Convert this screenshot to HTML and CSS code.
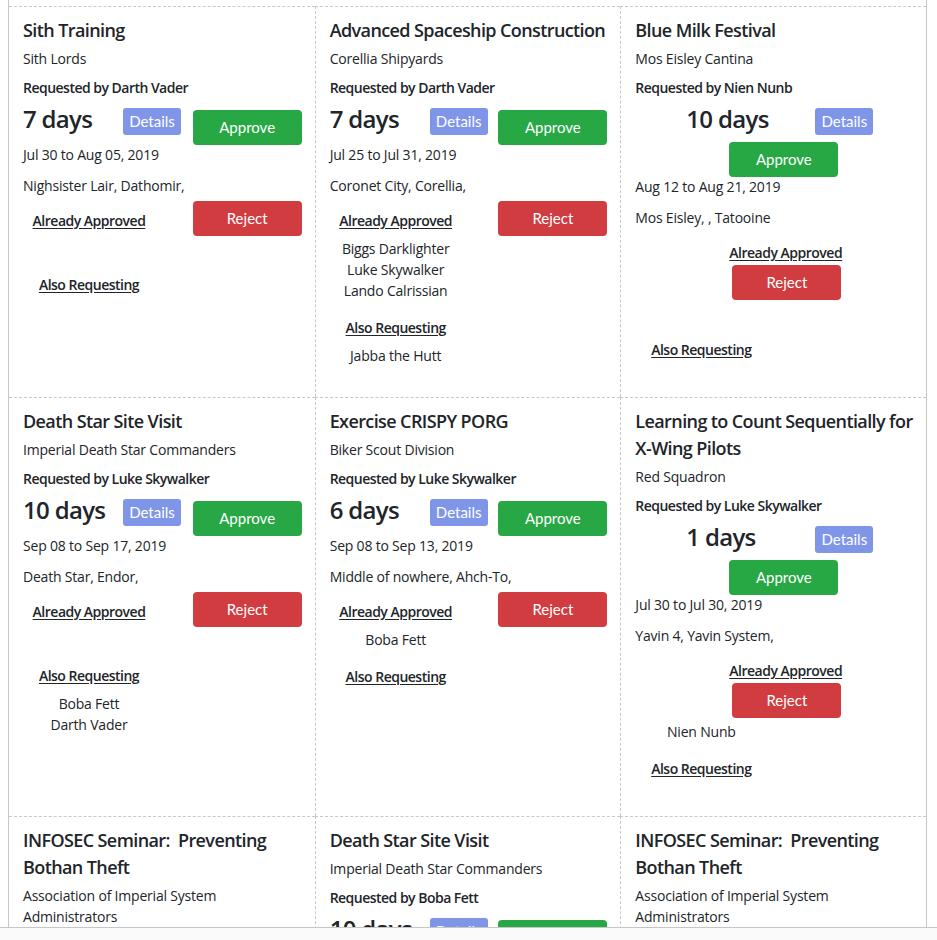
FILE: index.html
```html
<!DOCTYPE html>
<html lang="en">
<head>
<meta charset="utf-8">
<title>Training Requests</title>
<link rel="stylesheet" href="styles.css">
</head>
<body>
<main class="board">

  <section class="card">
    <h3 class="title">Sith Training</h3>
    <p class="org">Sith Lords</p>
    <p class="req">Requested by Darth Vader</p>
    <div class="summary">
      <span class="days">7 days</span>
      <button class="btn btn-details">Details</button>
      <button class="btn btn-approve">Approve</button>
    </div>
    <p class="dates">Jul 30 to Aug 05, 2019</p>
    <p class="loc">Nighsister Lair, Dathomir,</p>
    <div class="decision">
      <h4 class="list-head">Already Approved</h4>
      <ul class="names"></ul>
      <button class="btn btn-reject">Reject</button>
    </div>
    <div class="also">
      <h4 class="list-head">Also Requesting</h4>
      <ul class="names"></ul>
    </div>
  </section>

  <section class="card">
    <h3 class="title">Advanced Spaceship Construction</h3>
    <p class="org">Corellia Shipyards</p>
    <p class="req">Requested by Darth Vader</p>
    <div class="summary">
      <span class="days">7 days</span>
      <button class="btn btn-details">Details</button>
      <button class="btn btn-approve">Approve</button>
    </div>
    <p class="dates">Jul 25 to Jul 31, 2019</p>
    <p class="loc">Coronet City, Corellia,</p>
    <div class="decision">
      <h4 class="list-head">Already Approved</h4>
      <ul class="names">
        <li>Biggs Darklighter</li>
        <li>Luke Skywalker</li>
        <li>Lando Calrissian</li>
      </ul>
      <button class="btn btn-reject">Reject</button>
    </div>
    <div class="also">
      <h4 class="list-head">Also Requesting</h4>
      <ul class="names">
        <li>Jabba the Hutt</li>
      </ul>
    </div>
  </section>

  <section class="card card--wrap">
    <h3 class="title">Blue Milk Festival</h3>
    <p class="org">Mos Eisley Cantina</p>
    <p class="req">Requested by Nien Nunb</p>
    <div class="summary">
      <span class="days">10 days</span>
      <button class="btn btn-details">Details</button>
      <button class="btn btn-approve">Approve</button>
    </div>
    <p class="dates">Aug 12 to Aug 21, 2019</p>
    <p class="loc">Mos Eisley, , Tatooine</p>
    <div class="decision">
      <h4 class="list-head">Already Approved</h4>
      <ul class="names"></ul>
      <button class="btn btn-reject">Reject</button>
    </div>
    <div class="also">
      <h4 class="list-head">Also Requesting</h4>
      <ul class="names"></ul>
    </div>
  </section>

  <section class="card">
    <h3 class="title">Death Star Site Visit</h3>
    <p class="org">Imperial Death Star Commanders</p>
    <p class="req">Requested by Luke Skywalker</p>
    <div class="summary">
      <span class="days">10 days</span>
      <button class="btn btn-details">Details</button>
      <button class="btn btn-approve">Approve</button>
    </div>
    <p class="dates">Sep 08 to Sep 17, 2019</p>
    <p class="loc">Death Star, Endor,</p>
    <div class="decision">
      <h4 class="list-head">Already Approved</h4>
      <ul class="names"></ul>
      <button class="btn btn-reject">Reject</button>
    </div>
    <div class="also">
      <h4 class="list-head">Also Requesting</h4>
      <ul class="names">
        <li>Boba Fett</li>
        <li>Darth Vader</li>
      </ul>
    </div>
  </section>

  <section class="card">
    <h3 class="title">Exercise CRISPY PORG</h3>
    <p class="org">Biker Scout Division</p>
    <p class="req">Requested by Luke Skywalker</p>
    <div class="summary">
      <span class="days">6 days</span>
      <button class="btn btn-details">Details</button>
      <button class="btn btn-approve">Approve</button>
    </div>
    <p class="dates">Sep 08 to Sep 13, 2019</p>
    <p class="loc">Middle of nowhere, Ahch-To,</p>
    <div class="decision">
      <h4 class="list-head">Already Approved</h4>
      <ul class="names">
        <li>Boba Fett</li>
      </ul>
      <button class="btn btn-reject">Reject</button>
    </div>
    <div class="also">
      <h4 class="list-head">Also Requesting</h4>
      <ul class="names"></ul>
    </div>
  </section>

  <section class="card card--wrap">
    <h3 class="title">Learning to Count Sequentially for X-Wing Pilots</h3>
    <p class="org">Red Squadron</p>
    <p class="req">Requested by Luke Skywalker</p>
    <div class="summary">
      <span class="days">1 days</span>
      <button class="btn btn-details">Details</button>
      <button class="btn btn-approve">Approve</button>
    </div>
    <p class="dates">Jul 30 to Jul 30, 2019</p>
    <p class="loc">Yavin 4, Yavin System,</p>
    <div class="decision">
      <h4 class="list-head">Already Approved</h4>
      <ul class="names">
        <li>Nien Nunb</li>
      </ul>
      <button class="btn btn-reject">Reject</button>
    </div>
    <div class="also">
      <h4 class="list-head">Also Requesting</h4>
      <ul class="names"></ul>
    </div>
  </section>

  <section class="card">
    <h3 class="title">INFOSEC Seminar:&nbsp; Preventing Bothan Theft</h3>
    <p class="org">Association of Imperial System Administrators</p>
    <p class="req">Requested by Darth Vader</p>
    <div class="summary">
      <span class="days">3 days</span>
      <button class="btn btn-details">Details</button>
      <button class="btn btn-approve">Approve</button>
    </div>
    <p class="dates">Oct 01 to Oct 03, 2019</p>
    <p class="loc">Coruscant,</p>
    <div class="decision">
      <h4 class="list-head">Already Approved</h4>
      <ul class="names"></ul>
      <button class="btn btn-reject">Reject</button>
    </div>
    <div class="also">
      <h4 class="list-head">Also Requesting</h4>
      <ul class="names"></ul>
    </div>
  </section>

  <section class="card">
    <h3 class="title">Death Star Site Visit</h3>
    <p class="org">Imperial Death Star Commanders</p>
    <p class="req">Requested by Boba Fett</p>
    <div class="summary">
      <span class="days">10 days</span>
      <button class="btn btn-details">Details</button>
      <button class="btn btn-approve">Approve</button>
    </div>
    <p class="dates">Sep 08 to Sep 17, 2019</p>
    <p class="loc">Death Star, Endor,</p>
    <div class="decision">
      <h4 class="list-head">Already Approved</h4>
      <ul class="names"></ul>
      <button class="btn btn-reject">Reject</button>
    </div>
    <div class="also">
      <h4 class="list-head">Also Requesting</h4>
      <ul class="names"></ul>
    </div>
  </section>

  <section class="card card--wrap">
    <h3 class="title">INFOSEC Seminar:&nbsp; Preventing Bothan Theft</h3>
    <p class="org">Association of Imperial System Administrators</p>
    <p class="req">Requested by Nien Nunb</p>
    <div class="summary">
      <span class="days">3 days</span>
      <button class="btn btn-details">Details</button>
      <button class="btn btn-approve">Approve</button>
    </div>
    <p class="dates">Oct 01 to Oct 03, 2019</p>
    <p class="loc">Coruscant,</p>
    <div class="decision">
      <h4 class="list-head">Already Approved</h4>
      <ul class="names"></ul>
      <button class="btn btn-reject">Reject</button>
    </div>
    <div class="also">
      <h4 class="list-head">Also Requesting</h4>
      <ul class="names"></ul>
    </div>
  </section>

</main>
<div class="hscroll"></div>
</body>
</html>
```
FILE: styles.css
```css
* {
  box-sizing: border-box;
}

body {
  margin: 0 10px 0 8px;
  font-family: "Open Sans", "DejaVu Sans", sans-serif;
  font-size: 14px;
  line-height: 21px;
  letter-spacing: -0.2px;
  color: #212529;
  background: #fff;
}

.board {
  display: grid;
  grid-template-columns: repeat(3, 1fr);
  border-left: 1px solid #c6c6c6;
  border-right: 1px solid #c6c6c6;
  padding-top: 6px;
}

.card {
  min-width: 0;
  border-top: 1px dashed #c8c8c8;
  border-left: 1px dashed #c8c8c8;
  padding: 10px 13px 10px 14px;
}

.card:nth-child(3n+1) {
  border-left: none;
}

.title {
  margin: 0;
  font-size: 18px;
  font-weight: 600;
  line-height: 27px;
  letter-spacing: -0.6px;
  color: #212529;
}

.org {
  margin: 4px 0 0;
}

.req {
  margin: 8px 0 0;
  font-weight: 600;
  letter-spacing: -0.52px;
}

.summary {
  display: flex;
  align-items: flex-start;
  margin-top: 3px;
}

.days {
  flex: none;
  width: 100px;
  font-size: 24px;
  font-weight: 600;
  line-height: 36px;
  letter-spacing: -0.68px;
}

.btn {
  flex: none;
  display: flex;
  align-items: center;
  justify-content: center;
  padding: 0;
  border: 0;
  color: #fff;
  font-family: Lato, "Open Sans", sans-serif;
  font-size: 15px;
  line-height: 1;
  letter-spacing: 0;
}

.btn-details {
  width: 58px;
  height: 27px;
  margin-top: 7px;
  border-radius: 3px;
  background: #7f96e8;
}

.btn-approve {
  width: 109px;
  height: 35px;
  margin-top: 9px;
  margin-left: auto;
  border-radius: 4px;
  background: #28a745;
}

.btn-reject {
  width: 109px;
  height: 35px;
  border-radius: 4px;
  background: #d13c40;
}

.dates {
  margin: -1px 0 10px;
}

.loc {
  margin: 0;
}

.decision {
  display: grid;
  grid-template-columns: 132px 1fr 109px;
  grid-template-areas:
    "head . reject"
    "list . reject";
  align-items: start;
  margin-top: 5px;
}

.decision .list-head {
  grid-area: head;
  padding-top: 9px;
}

.decision .names {
  grid-area: list;
}

.decision .btn-reject {
  grid-area: reject;
}

.list-head {
  margin: 0;
  font-size: 14px;
  font-weight: 600;
  line-height: 21px;
  letter-spacing: -0.5px;
  text-align: center;
  text-decoration: underline;
  text-underline-offset: 2px;
}

.names {
  list-style: none;
  margin: 7px 0 0;
  padding: 0;
  min-height: 20px;
  text-align: center;
}

.also {
  width: 132px;
  margin-top: 16px;
  text-align: center;
}

.card--wrap .summary {
  flex-wrap: wrap;
}

.card--wrap .days {
  margin-left: 51px;
}

.card--wrap .btn-details {
  margin-left: 29px;
}

.card--wrap .btn-approve {
  margin-left: 94px;
  margin-top: 5px;
}

.card--wrap .decision {
  grid-template-columns: 1fr;
  grid-template-areas:
    "head"
    "reject"
    "list";
}

.card--wrap .decision .list-head {
  justify-self: start;
  margin-left: 94px;
}

.card--wrap .decision .btn-reject {
  justify-self: start;
  margin-left: 97px;
  margin-top: 2px;
}

.card--wrap .decision .names {
  width: 132px;
  margin-top: 3px;
}

.hscroll {
  position: fixed;
  left: 0;
  right: 0;
  bottom: 0;
  height: 13px;
  border-top: 1px solid #c6c6c6;
  background: #fafafa;
}
```
